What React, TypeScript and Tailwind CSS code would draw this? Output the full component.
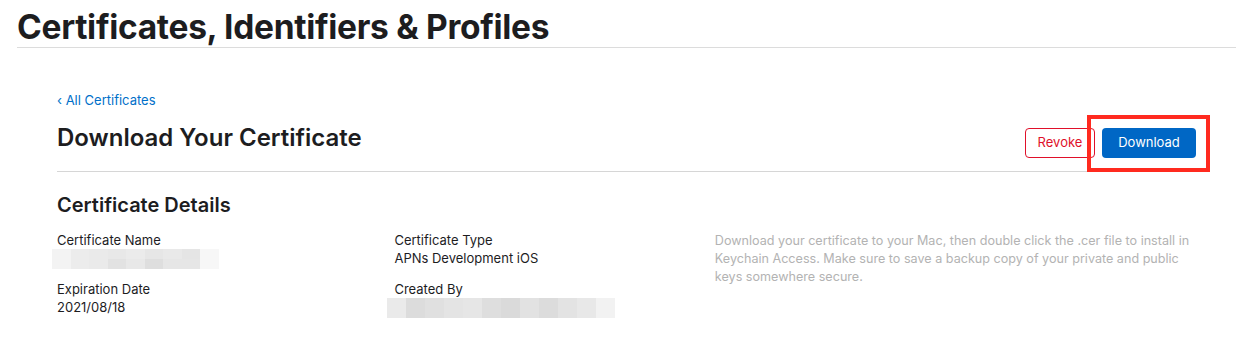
import React from "react";

const nameCells = [
  ["#f3f3f3", "#ececec", "#eaeaea", "#e8e8e8", "#ebebeb", "#e6e6e6", "#e9e9e9", "#e5e5e5", "#f7f7f7"],
  ["#f3f3f3", "#ececec", "#eaeaea", "#e2e2e2", "#e8e8e8", "#dedede", "#e6e6e6", "#e6e6e6", "#f7f7f7"],
];
const createdCells = [
  "#eaeaea", "#dcdcdc", "#e0e0e0", "#e4e4e4", "#e6e6e6", "#dedede", "#dadada", "#e2e2e2", "#dcdcdc", "#e3e3e3", "#e8e8e8", "#f2f2f2",
];

function Blur({ rows, cell, h }: { rows: string[][]; cell: number; h: number }) {
  return (
    <div className="flex flex-col">
      {rows.map((r, i) => (
        <div key={i} className="flex">
          {r.map((c, j) => (
            <div key={j} style={{ background: c, width: cell, height: h }} />
          ))}
        </div>
      ))}
    </div>
  );
}

export default function App() {
  return (
    <div
      className="w-[1253px] h-[350px] bg-white text-[#1d1d1f] overflow-hidden"
      style={{ fontFamily: "Inter, 'Noto Sans', sans-serif" }}
    >
      <div className="px-[17px]">
        <h1 className="pt-[8px] h-[48px] border-b border-[#dcdcdc] text-[33.5px] leading-[38px] font-bold tracking-[-0.3px]">
          Certificates, Identifiers &amp; Profiles
        </h1>
      </div>
      <div className="px-[57px]">
        <div className="pt-[44px] text-[13px] leading-[16px] text-[#0070c9]">‹ All Certificates</div>
        <div className="flex items-start justify-between border-b border-[#d6d6d6] h-[64px]">
          <h2 className="mt-[16px] text-[24px] leading-[28px] font-semibold">Download Your Certificate</h2>
          <div className="flex gap-[7px] mt-[20px]">
            <button className="h-[30px] w-[70px] rounded-[4px] border border-[#e0102a] text-[13px] text-[#e0102a] bg-white">
              Revoke
            </button>
            <div className="relative">
              <button className="h-[30px] w-[94px] rounded-[4px] bg-[#0067c5] text-white text-[13px]">
                Download
              </button>
              <div className="absolute left-[-15px] top-[-13px] w-[123px] h-[57px] border-[4px] border-[#ff2a1f]" />
            </div>
          </div>
        </div>
        <h3 className="mt-[21px] text-[20px] leading-[24px] font-semibold">Certificate Details</h3>
        <div className="flex mt-[14px] text-[13px] leading-[18px]">
          <div className="w-[338px] flex flex-col">
            <div>Certificate Name</div>
            <div className="ml-[-5px] h-[18px]">
              <Blur rows={nameCells} cell={18.5} h={10} />
            </div>
            <div className="mt-[13px]">Expiration Date</div>
            <div>2021/08/18</div>
          </div>
          <div className="w-[321px] flex flex-col">
            <div>Certificate Type</div>
            <div>APNs Development iOS</div>
            <div className="mt-[13px]">Created By</div>
            <div className="ml-[-7px]">
              <Blur rows={[createdCells]} cell={19} h={20} />
            </div>
          </div>
          <div className="w-[482px] mt-[1px] text-[12.6px] text-[#b3b3b3]">
            Download your certificate to your Mac, then double click the .cer file to install in Keychain Access. Make
            sure to save a backup copy of your private and public keys somewhere secure.
          </div>
        </div>
      </div>
    </div>
  );
}
